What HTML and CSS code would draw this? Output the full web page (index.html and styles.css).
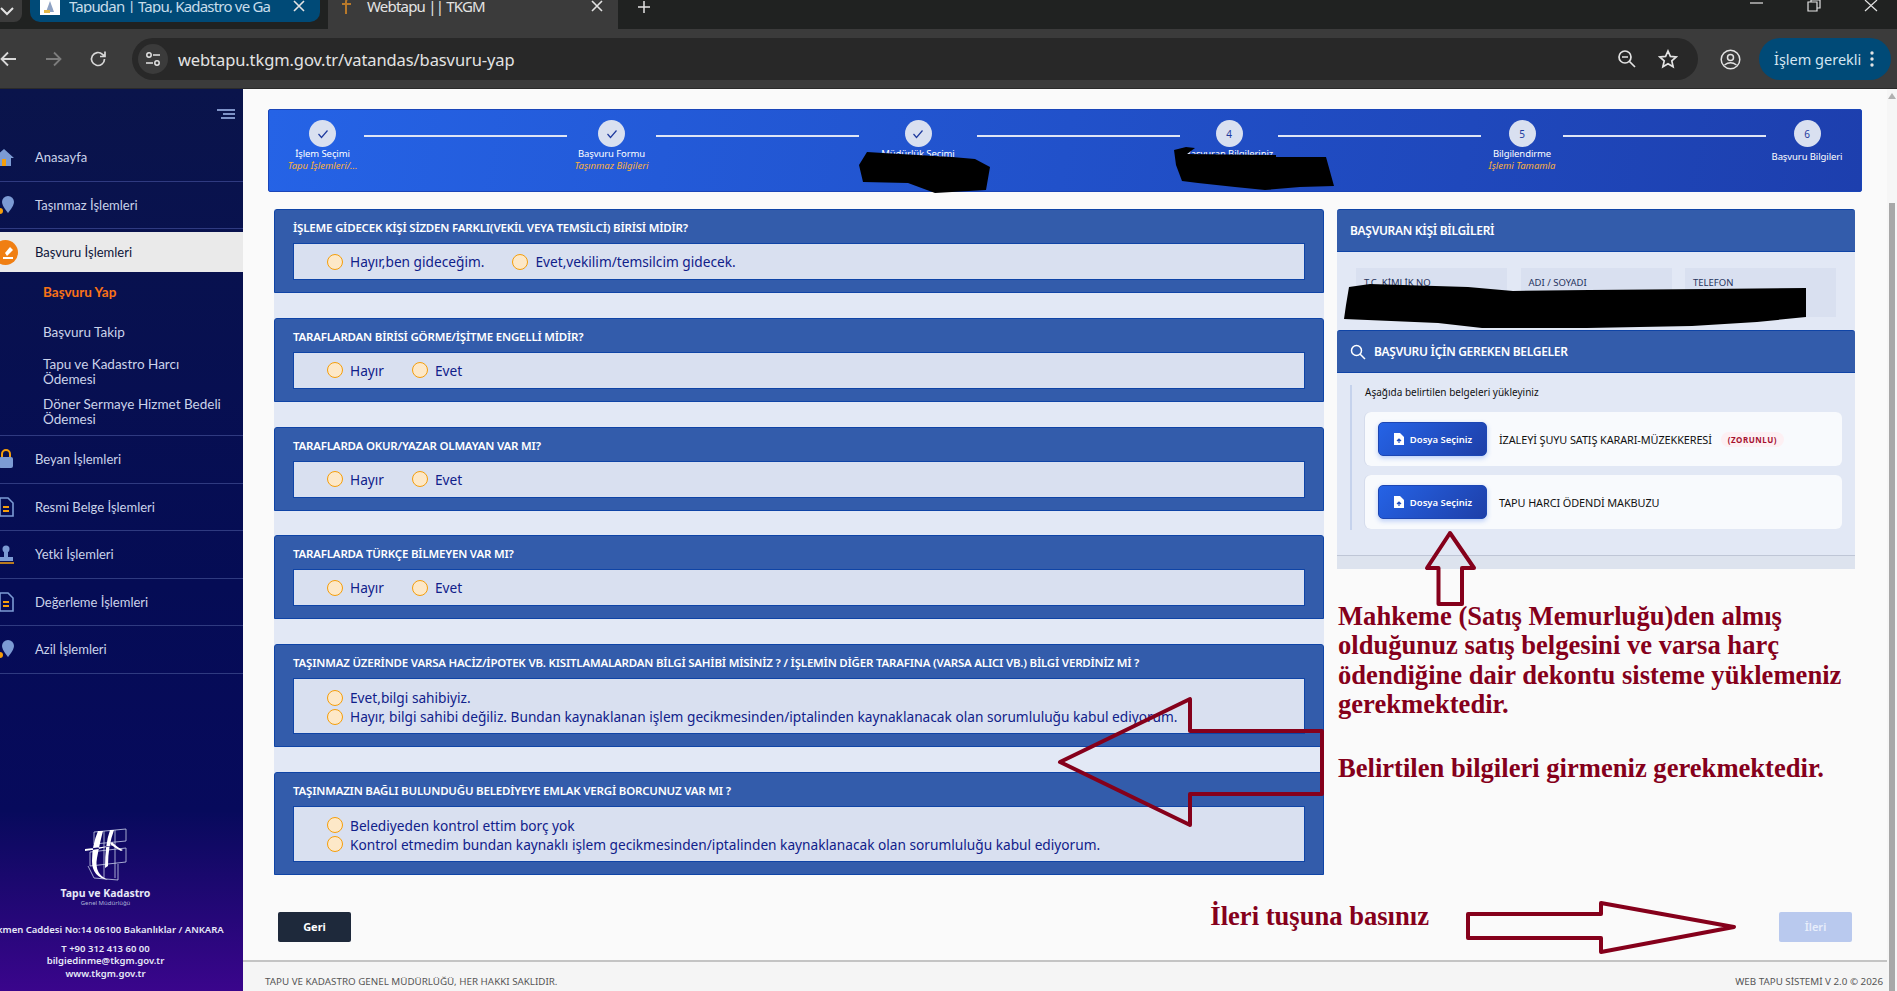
FILE: index.html
```html
<!DOCTYPE html>
<html lang="tr">
<head>
    <meta charset="UTF-8">
    <title>Webtapu || TKGM</title>
    <link rel="stylesheet" href="styles.css">
</head>
<body>

<header class="chrome">
    <div class="tabstrip">
        <div class="tab-menu"><svg width="14" height="10" viewBox="0 0 14 10"><path d="M1 1l6 6 6-6" fill="none" stroke="#e3e3e3" stroke-width="2"/></svg></div>
        <div class="tab tab-group">
            <span class="favicon"><svg width="20" height="15" viewBox="0 0 20 15"><path d="M6 12l4-11 4 11z" fill="#8fa3c4"/><rect x="4" y="10" width="6" height="3" fill="#e2b84a"/></svg></span>
            <span class="tab-title">Tapudan | Tapu, Kadastro ve Ga</span>
            <svg class="tab-close" width="12" height="12" viewBox="0 0 12 12"><path d="M1 1l10 10M11 1L1 11" stroke="#e3e3e3" stroke-width="1.6"/></svg>
        </div>
        <div class="tab tab-active">
            <svg class="tab-icon" width="18" height="18" viewBox="0 0 18 18"><path d="M6 17V5q0-4 5-4M2 7h9" fill="none" stroke="#b8792a" stroke-width="2"/></svg>
            <span class="tab-title">Webtapu || TKGM</span>
            <svg class="tab-close" width="12" height="12" viewBox="0 0 12 12"><path d="M1 1l10 10M11 1L1 11" stroke="#e3e3e3" stroke-width="1.6"/></svg>
        </div>
        <svg class="new-tab" width="14" height="14" viewBox="0 0 14 14"><path d="M7 1v12M1 7h12" stroke="#e3e3e3" stroke-width="1.5"/></svg>
        <div class="win-controls">
            <svg width="14" height="8" viewBox="0 0 14 8"><path d="M0 3h13" stroke="#e3e3e3" stroke-width="1.2"/></svg>
            <svg width="14" height="12" viewBox="0 0 14 12"><path d="M1 2h9v9H1zM4 2V0h9v8h-3" fill="none" stroke="#e3e3e3" stroke-width="1.2"/></svg>
            <svg width="14" height="12" viewBox="0 0 14 12"><path d="M1 0l12 11M13 0L1 11" stroke="#e3e3e3" stroke-width="1.2"/></svg>
        </div>
    </div>
    <div class="toolbar">
        <svg class="nav-icon nav-back" width="18" height="16" viewBox="0 0 18 16"><path d="M16 8H2M8 1.500L1.500 8 8 14.500" fill="none" stroke="#d8d8d8" stroke-width="1.8"/></svg>
        <svg class="nav-icon nav-forward" width="18" height="16" viewBox="0 0 18 16"><path d="M2 8h14M10 1.500L16.500 8 10 14.500" fill="none" stroke="#7d7d7d" stroke-width="1.800"/></svg>
        <svg class="nav-icon nav-reload" width="18" height="18" viewBox="0 0 18 18"><path d="M15.500 9a6.500 6.500 0 1 1-2-4.700L16 6.500M16 1.500v5h-5" fill="none" stroke="#d8d8d8" stroke-width="1.700"/></svg>
        <div class="omnibox">
            <span class="site-chip"><svg width="16" height="16" viewBox="0 0 16 16"><circle cx="4" cy="4" r="2.200" fill="none" stroke="#e3e3e3" stroke-width="1.500"/><circle cx="12" cy="12" r="2.200" fill="none" stroke="#e3e3e3" stroke-width="1.500"/><path d="M8 4h7M1 12h7" stroke="#e3e3e3" stroke-width="1.500"/></svg></span>
            <span class="url">webtapu.tkgm.gov.tr/vatandas/basvuru-yap</span>
            <svg class="omni-zoom" width="20" height="20" viewBox="0 0 20 20"><circle cx="8" cy="8" r="6" fill="none" stroke="#e3e3e3" stroke-width="1.700"/><path d="M5 8h6M12.500 12.500L18 18" stroke="#e3e3e3" stroke-width="1.700"/></svg>
            <svg class="omni-star" width="20" height="20" viewBox="0 0 20 20"><path d="M10 2l2.400 5.400 5.800.6-4.400 3.900 1.300 5.800L10 14.700l-5.100 3 1.300-5.800L1.800 8l5.800-.6z" fill="none" stroke="#e3e3e3" stroke-width="1.700"/></svg>
        </div>
        <svg class="profile" width="21" height="21" viewBox="0 0 21 21"><circle cx="10.500" cy="10.500" r="9.300" fill="none" stroke="#e3e3e3" stroke-width="1.500"/><circle cx="10.500" cy="8.500" r="3" fill="none" stroke="#e3e3e3" stroke-width="1.500"/><path d="M4.500 16q6-4.500 12 0" fill="none" stroke="#e3e3e3" stroke-width="1.500"/></svg>
        <div class="action-pill">
            <span>İşlem gerekli</span>
            <svg width="4" height="16" viewBox="0 0 4 16"><circle cx="2" cy="2" r="1.700" fill="#e3e3e3"/><circle cx="2" cy="8" r="1.700" fill="#e3e3e3"/><circle cx="2" cy="14" r="1.700" fill="#e3e3e3"/></svg>
        </div>
    </div>
</header>

<div class="app">
    <aside class="sidebar">
        <div class="sidebar-inner">
            <div class="hamburger"><span class="ham-long"></span><span class="ham-short"></span><span class="ham-mid"></span></div>
            <nav class="menu">
                <a class="menu-item">
                    <svg class="menu-icon" viewBox="0 0 20 20"><path d="M10 2L0 11h3v8h14v-8h3z" fill="#7c9bd4"/><rect x="8" y="12" width="4" height="7" fill="#f59e0b"/></svg>
                    Anasayfa
                </a>
                <a class="menu-item">
                    <svg class="menu-icon" viewBox="0 0 20 20"><path d="M14 1a6 6 0 0 1 6 6c0 4-6 11-6 11S8 11 8 7a6 6 0 0 1 6-6z" fill="#7c9bd4"/><circle cx="6" cy="16" r="3" fill="#f59e0b"/></svg>
                    Taşınmaz İşlemleri
                </a>
                <a class="menu-item menu-active">
                    <span class="active-badge"><svg width="18" height="18" viewBox="0 0 18 18"><path d="M8 10l5-6 3 3-6 6z" fill="#fff"/><path d="M6 15h10" stroke="#fff" stroke-width="2"/></svg></span>
                    Başvuru İşlemleri
                </a>
                <div class="submenu">
                    <a class="sub-item sub-current">Başvuru Yap</a>
                    <a class="sub-item">Başvuru Takip</a>
                    <a class="sub-item">Tapu ve Kadastro Harcı Ödemesi</a>
                    <a class="sub-item">Döner Sermaye Hizmet Bedeli Ödemesi</a>
                </div>
                <a class="menu-item">
                    <svg class="menu-icon" viewBox="0 0 20 20"><rect x="5" y="8" width="14" height="11" rx="2" fill="#7c9bd4"/><path d="M8 8V5a4 4 0 0 1 8 0v3" fill="none" stroke="#f59e0b" stroke-width="2"/></svg>
                    Beyan İşlemleri
                </a>
                <a class="menu-item">
                    <svg class="menu-icon" viewBox="0 0 20 20"><path d="M6 1h8l5 5v13H6z" fill="none" stroke="#7c9bd4" stroke-width="1.600"/><path d="M9 10h6M9 14h6" stroke="#f59e0b" stroke-width="2"/></svg>
                    Resmi Belge İşlemleri
                </a>
                <a class="menu-item">
                    <svg class="menu-icon" viewBox="0 0 20 20"><circle cx="12" cy="5" r="3.500" fill="#7c9bd4"/><path d="M10 8h4v5h5v4H5v-4h5z" fill="#7c9bd4"/><path d="M4 19h16" stroke="#f59e0b" stroke-width="1.500"/></svg>
                    Yetki İşlemleri
                </a>
                <a class="menu-item">
                    <svg class="menu-icon" viewBox="0 0 20 20"><path d="M6 1h8l5 5v13H6z" fill="none" stroke="#7c9bd4" stroke-width="1.600"/><path d="M9 10h6M9 14h6" stroke="#f59e0b" stroke-width="2"/></svg>
                    Değerleme İşlemleri
                </a>
                <a class="menu-item">
                    <svg class="menu-icon" viewBox="0 0 20 20"><path d="M14 1a6 6 0 0 1 6 6c0 4-6 11-6 11S8 11 8 7a6 6 0 0 1 6-6z" fill="#7c9bd4"/><circle cx="6" cy="16" r="3" fill="#f59e0b"/></svg>
                    Azil İşlemleri
                </a>
            </nav>
            <div class="sidebar-foot">
                <svg class="tkgm-logo" width="44" height="54" viewBox="0 0 44 54">
                    <g fill="none" stroke="#c9d0ea" stroke-width="0.800"><path d="M10 4l32-3v12l-32 3zM6 24l36-4v14l-36 4zM4 38l6 12 24 2V36M20 3v48M31 2v48"/></g>
                    <path d="M14 3q-6 14-6 30t16 19q-14-6-11-22t6-27zM26 2q-5 14-5 38l3-2q0-20 6-36zM1 21q18-2 30-4-14 4-30 6zM28 14q6 6 11 8l-2 1q-6-3-11-7z" fill="#fff"/>
                </svg>
                <div class="logo-name">Tapu ve Kadastro</div>
                <div class="logo-sub">Genel Müdürlüğü</div>
                <div class="foot-address">Dikmen Caddesi No:14 06100 Bakanlıklar / ANKARA</div>
                <div class="foot-contact">
                    <div>T +90 312 413 60 00</div>
                    <div>bilgiedinme@tkgm.gov.tr</div>
                    <div>www.tkgm.gov.tr</div>
                </div>
            </div>
        </div>
    </aside>

    <main class="main">
        <div class="content">
            <div class="stepper">
                <div class="step step-first">
                    <span class="step-dot"><svg width="12" height="10" viewBox="0 0 12 10"><path d="M1.500 5l3 3.500L10.500 1.500" fill="none" stroke="#1e3a9e" stroke-width="1.200"/></svg></span>
                    <span class="step-label">İşlem Seçimi</span>
                    <span class="step-sub">Tapu İşlemleri/...</span>
                </div>
                <span class="step-line"></span>
                <div class="step step-second">
                    <span class="step-dot"><svg width="12" height="10" viewBox="0 0 12 10"><path d="M1.500 5l3 3.500L10.500 1.500" fill="none" stroke="#1e3a9e" stroke-width="1.200"/></svg></span>
                    <span class="step-label">Başvuru Formu</span>
                    <span class="step-sub">Taşınmaz Bilgileri</span>
                </div>
                <span class="step-line"></span>
                <div class="step step-third">
                    <span class="step-dot"><svg width="12" height="10" viewBox="0 0 12 10"><path d="M1.500 5l3 3.500L10.500 1.500" fill="none" stroke="#1e3a9e" stroke-width="1.200"/></svg></span>
                    <span class="step-label">Müdürlük Seçimi</span>
                </div>
                <span class="step-line"></span>
                <div class="step step-fourth">
                    <span class="step-dot">4</span>
                    <span class="step-label">Başvuran Bilgileriniz</span>
                </div>
                <span class="step-line"></span>
                <div class="step">
                    <span class="step-dot">5</span>
                    <span class="step-label">Bilgilendirme</span>
                    <span class="step-sub">İşlemi Tamamla</span>
                </div>
                <span class="step-line"></span>
                <div class="step step-last">
                    <span class="step-dot">6</span>
                    <span class="step-label">Başvuru Bilgileri</span>
                </div>
            </div>

            <div class="columns">
                <section class="questions">
                    <div class="q-card">
                        <h3 class="q-title">İŞLEME GİDECEK KİŞİ SİZDEN FARKLI(VEKİL VEYA TEMSİLCİ) BİRİSİ MİDİR?</h3>
                        <div class="q-box q-inline">
                            <label class="radio"><span class="radio-dot"></span>Hayır,ben gideceğim.</label>
                            <label class="radio"><span class="radio-dot"></span>Evet,vekilim/temsilcim gidecek.</label>
                        </div>
                    </div>
                    <div class="q-card">
                        <h3 class="q-title">TARAFLARDAN BİRİSİ GÖRME/İŞİTME ENGELLİ MİDİR?</h3>
                        <div class="q-box q-inline">
                            <label class="radio"><span class="radio-dot"></span>Hayır</label>
                            <label class="radio"><span class="radio-dot"></span>Evet</label>
                        </div>
                    </div>
                    <div class="q-card">
                        <h3 class="q-title">TARAFLARDA OKUR/YAZAR OLMAYAN VAR MI?</h3>
                        <div class="q-box q-inline">
                            <label class="radio"><span class="radio-dot"></span>Hayır</label>
                            <label class="radio"><span class="radio-dot"></span>Evet</label>
                        </div>
                    </div>
                    <div class="q-card">
                        <h3 class="q-title">TARAFLARDA TÜRKÇE BİLMEYEN VAR MI?</h3>
                        <div class="q-box q-inline">
                            <label class="radio"><span class="radio-dot"></span>Hayır</label>
                            <label class="radio"><span class="radio-dot"></span>Evet</label>
                        </div>
                    </div>
                    <div class="q-card">
                        <h3 class="q-title">TAŞINMAZ ÜZERİNDE VARSA HACİZ/İPOTEK VB. KISITLAMALARDAN BİLGİ SAHİBİ MİSİNİZ ? / İŞLEMİN DİĞER TARAFINA (VARSA ALICI VB.) BİLGİ VERDİNİZ Mİ ?</h3>
                        <div class="q-box q-stack">
                            <label class="radio"><span class="radio-dot"></span>Evet,bilgi sahibiyiz.</label>
                            <label class="radio"><span class="radio-dot"></span>Hayır, bilgi sahibi değiliz. Bundan kaynaklanan işlem gecikmesinden/iptalinden kaynaklanacak olan sorumluluğu kabul ediyorum.</label>
                        </div>
                    </div>
                    <div class="q-card">
                        <h3 class="q-title">TAŞINMAZIN BAĞLI BULUNDUĞU BELEDİYEYE EMLAK VERGİ BORCUNUZ VAR MI ?</h3>
                        <div class="q-box q-stack">
                            <label class="radio"><span class="radio-dot"></span>Belediyeden kontrol ettim borç yok</label>
                            <label class="radio"><span class="radio-dot"></span>Kontrol etmedim bundan kaynaklı işlem gecikmesinden/iptalinden kaynaklanacak olan sorumluluğu kabul ediyorum.</label>
                        </div>
                    </div>
                </section>

                <section class="side-col">
                    <div class="panel">
                        <h3 class="panel-head">BAŞVURAN KİŞİ BİLGİLERİ</h3>
                        <div class="fields">
                            <div class="field">T.C. KİMLİK NO</div>
                            <div class="field">ADI / SOYADI</div>
                            <div class="field">TELEFON</div>
                        </div>
                        <h3 class="panel-head">
                            <svg width="16" height="16" viewBox="0 0 16 16"><circle cx="6.500" cy="6.500" r="5" fill="none" stroke="#fff" stroke-width="1.500"/><path d="M10 10l5 5" stroke="#fff" stroke-width="1.500"/></svg>
                            BAŞVURU İÇİN GEREKEN BELGELER
                        </h3>
                        <div class="docs">
                            <p class="docs-note">Aşağıda belirtilen belgeleri yükleyiniz</p>
                            <div class="doc-row">
                                <button class="file-btn"><svg width="12" height="14" viewBox="0 0 12 14"><path d="M1 1h6l4 4v8H1z" fill="#fff"/><path d="M6 11V7M4 9l2-2 2 2" fill="none" stroke="#1f4ec0" stroke-width="1.200"/></svg>Dosya Seçiniz</button>
                                <span class="doc-name">İZALEYİ ŞUYU SATIŞ KARARI-MÜZEKKERESİ</span>
                                <span class="doc-badge">(ZORUNLU)</span>
                            </div>
                            <div class="doc-row">
                                <button class="file-btn"><svg width="12" height="14" viewBox="0 0 12 14"><path d="M1 1h6l4 4v8H1z" fill="#fff"/><path d="M6 11V7M4 9l2-2 2 2" fill="none" stroke="#1f4ec0" stroke-width="1.200"/></svg>Dosya Seçiniz</button>
                                <span class="doc-name">TAPU HARCI ÖDENDİ MAKBUZU</span>
                            </div>
                        </div>
                        <div class="panel-foot"></div>
                    </div>
                    <p class="note note-first">Mahkeme (Satış Memurluğu)den almış olduğunuz satış belgesini ve varsa harç ödendiğine dair dekontu sisteme yüklemeniz gerekmektedir.</p>
                    <p class="note note-second">Belirtilen bilgileri girmeniz gerekmektedir.</p>
                </section>
            </div>

            <div class="actions">
                <button class="btn-back">Geri</button>
                <span class="note note-next">İleri tuşuna basınız</span>
                <button class="btn-next">İleri</button>
            </div>
        </div>
        <footer class="page-foot">
            <span>TAPU VE KADASTRO GENEL MÜDÜRLÜĞÜ, HER HAKKI SAKLIDIR.</span>
            <span>WEB TAPU SİSTEMİ V 2.0 © 2026</span>
        </footer>
    </main>

    <div class="scrollbar"><span class="scroll-up"></span><span class="scroll-thumb"></span></div>
</div>

<!-- kullanicinin ekran goruntusune cizdigi isaretler -->
<svg class="markup" width="1897" height="991" viewBox="0 0 1897 991">
    <g fill="#000">
        <path d="M867 152l16 1 69 4 23 2 15 8-4 23-51 3-27-10-45-1-4-17z"/>
        <path d="M1174 150l12-3 9 1-8 6 89 1 0 2 50 0 8 29-34 1-35 3-30-3-37-4-16-2-6-16z"/>
        <path d="M1349 287l21-3 98 3 45 4 76-1 118-1 99-1 0 29-49 5-65 4-105 2-105 0-44-5-94-4 2-14z"/>
    </g>
    <g fill="none" stroke="#85001b" stroke-width="4" stroke-linejoin="round">
        <path d="M1060 762l130-63v32h132v63h-132v31z"/>
        <path d="M1468 914h133v-11l133 24-133 25v-14h-133z"/>
        <path d="M1450 533l-23 35h11.500v36h23.500v-36h12z"/>
    </g>
</svg>

</body>
</html>
```

FILE: styles.css
```css
* {
    box-sizing: border-box;
}
html, body {
    margin: 0;
    height: 100%;
}
body {
    display: flex;
    flex-direction: column;
    height: 100vh;
    overflow: hidden;
    position: relative;
    font-family: "Noto Sans", Arial, sans-serif;
    background-color: #fafafa;
}

/* tarayici */
.chrome {
    flex: none;
    background-color: #3b3b3b;
    color: #e3e3e3;
}
.tabstrip {
    display: flex;
    align-items: flex-start;
    height: 29px;
    background-color: #202221;
}
.tab-menu {
    width: 22px;
    height: 22px;
    background-color: #3b3b3b;
    border-radius: 0 0 8px 0;
}
.tab {
    display: flex;
    align-items: flex-start;
    overflow: hidden;
}
.tab-title {
    font-size: 15px;
    letter-spacing: -0.8px;
    line-height: 13px;
    white-space: nowrap;
}
.tab-group {
    margin-left: 8px;
    width: 290px;
    height: 22px;
    padding-left: 10px;
    background-color: #004a77;
    border-radius: 0 0 10px 10px;
    color: #c6dcea;
}
.favicon {
    width: 20px;
    height: 15px;
    background-color: #fff;
    margin-right: 9px;
    flex: none;
}
.favicon svg {
    display: block;
}
.tab-group .tab-title {
    width: 206px;
    margin-right: 18px;
    overflow: hidden;
}
.tab-close {
    flex: none;
}
.tab-active {
    margin-left: 8px;
    width: 290px;
    height: 29px;
    padding-left: 12px;
    background-color: #3b3b3b;
}
.tab-icon {
    margin-right: 9px;
    margin-top: -3px;
    flex: none;
}
.tab-active .tab-title {
    width: 224px;
}
.new-tab {
    margin-left: 19px;
}
.win-controls {
    margin-left: auto;
    display: flex;
    gap: 43px;
    padding-right: 19px;
}
.toolbar {
    display: flex;
    align-items: center;
    height: 60px;
    border-bottom: 1px solid #2a2a2a;
    padding-top: 1px;
}
.nav-forward {
    margin-left: 26px;
}
.nav-reload {
    margin-left: 27px;
}
.omnibox {
    display: flex;
    align-items: center;
    margin-left: 25px;
    width: 1566px;
    height: 42px;
    background-color: #282828;
    border-radius: 21px;
    padding: 0 18px 0 6px;
}
.site-chip {
    display: flex;
    align-items: center;
    justify-content: center;
    width: 30px;
    height: 30px;
    border-radius: 50%;
    background-color: #3b3b3b;
}
.url {
    margin-left: 10px;
    font-size: 16.500px;
    letter-spacing: -0.1px;
}
.omni-zoom {
    margin-left: auto;
}
.omni-star {
    margin-left: 21px;
    margin-right: 2px;
}
.profile {
    margin-left: 22px;
}
.action-pill {
    display: flex;
    align-items: center;
    margin-left: 18px;
    width: 132px;
    height: 42px;
    padding: 0 17px 0 15px;
    justify-content: space-between;
    background-color: #004a77;
    border-radius: 21px;
    font-size: 14.500px;
    color: #d4e6f2;
}

/* uygulama */
.app {
    flex: 1;
    display: flex;
    min-height: 0;
}
.sidebar {
    flex: none;
    width: 243px;
    overflow: hidden;
    background: linear-gradient(180deg, #0a144b 0%, #050c55 55%, #070a5c 80%, #3a058c 100%);
}
.sidebar-inner {
    display: flex;
    flex-direction: column;
    height: 100%;
    width: 259px;
    margin-left: -16px;
}
.hamburger {
    display: flex;
    flex-direction: column;
    align-items: flex-end;
    gap: 2px;
    padding: 20px 8px 0 0;
    height: 45px;
}
.hamburger span {
    display: block;
    height: 2px;
    background-color: #7e93c8;
}
.ham-long {
    width: 18px;
}
.ham-short {
    width: 12px;
}
.ham-mid {
    width: 14px;
}
.menu-item {
    display: flex;
    align-items: center;
    height: 47.500px;
    padding-left: 10px;
    gap: 21px;
    font-family: Lato, Arial, sans-serif;
    font-size: 13px;
    color: #cbd3ea;
    border-bottom: 1px solid #2f3a80;
}
.menu-icon {
    width: 20px;
    height: 20px;
    flex: none;
}
.menu-active {
    height: 40px;
    margin-top: 3px;
    padding-left: 9px;
    gap: 17px;
    background-color: #eaeaea;
    color: #0d1438;
    border-bottom: none;
}
.active-badge {
    display: flex;
    align-items: center;
    justify-content: center;
    width: 25px;
    height: 25px;
    border-radius: 50%;
    background-color: #f07f13;
    flex: none;
}
.submenu {
    padding: 13px 16px 0 59px;
    height: 164px;
    border-bottom: 1px solid #2f3a80;
    font-family: Lato, Arial, sans-serif;
    font-size: 13.500px;
    line-height: 15px;
    color: #cbd3ea;
}
.sub-item {
    display: block;
    margin-bottom: 10px;
}
.sub-item:nth-child(1) {
    margin-bottom: 25px;
}
.sub-item:nth-child(2) {
    margin-bottom: 17px;
}
.sub-current {
    color: #f97316;
    font-weight: 700;
}
.sidebar-foot {
    margin-top: auto;
    padding: 0 16px 11px 0;
    text-align: center;
    color: #e6e9f7;
    white-space: nowrap;
}
.tkgm-logo {
    display: block;
    margin: 0 auto;
}
.logo-name {
    font-size: 10.500px;
    font-weight: 700;
    line-height: 14px;
    margin-top: 4px;
}
.logo-sub {
    font-size: 6px;
    line-height: 6px;
    color: #aab3d8;
}
.foot-address {
    font-size: 9.500px;
    font-weight: 600;
    margin-top: 17px;
    line-height: 14px;
}
.foot-contact {
    margin-top: 6px;
    font-size: 9.500px;
    font-weight: 600;
    line-height: 12.500px;
}

/* icerik */
.main {
    flex: 1;
    display: flex;
    flex-direction: column;
    min-width: 0;
    background-color: #fafafa;
}
.content {
    flex: 1;
    padding: 20px 25px 0;
}
.stepper {
    display: flex;
    align-items: flex-start;
    height: 83px;
    padding: 0 13px 0 12px;
    background: linear-gradient(100deg, #2563e6, #1d3fae);
    border: 1px solid #1a45b8;
    border-radius: 2px;
    color: #fff;
}
.step {
    display: flex;
    flex-direction: column;
    align-items: center;
    flex: none;
    padding-top: 10px;
    width: 82px;
    white-space: nowrap;
}
.step-first {
    width: 83px;
}
.step-second {
    width: 89px;
}
.step-third {
    width: 118px;
}
.step-fourth {
    width: 98px;
}
.step-dot {
    display: flex;
    align-items: center;
    justify-content: center;
    width: 27px;
    height: 27px;
    border-radius: 50%;
    background-color: #d9e0f0;
    color: #1e3a9e;
    font-size: 10px;
}
.step-label {
    font-size: 9.500px;
    letter-spacing: -0.1px;
    line-height: 12px;
    margin-top: 1px;
}
.step-sub {
    font-size: 9.500px;
    line-height: 12px;
    font-style: italic;
    color: #fbb03b;
}
.step-last .step-label {
    margin-top: 4px;
}
.step-line {
    flex: 1;
    height: 2px;
    margin-top: 25px;
    background-color: #dfe5f5;
}
.columns {
    display: flex;
    align-items: flex-start;
    gap: 13px;
    margin: 17px 7px 0 6px;
}
.questions {
    flex: none;
    width: 1050px;
    display: flex;
    flex-direction: column;
    gap: 24.750px;
    background-color: #e2e8f5;
}
.q-card {
    background-color: #335cab;
    border: 1px solid #0f44a6;
    border-radius: 3px 3px 0 0;
    padding: 0 18px 12px;
}
.q-title {
    margin: 0;
    height: 33px;
    line-height: 36px;
    font-size: 11.500px;
    font-weight: 600;
    letter-spacing: -0.2px;
    color: #fff;
    white-space: nowrap;
}
.q-box {
    background-color: #d9e0f0;
    border: 1px solid #0f44a6;
    padding-left: 33px;
    color: #10208a;
    font-size: 13.700px;
}
.q-inline {
    display: flex;
    align-items: center;
    gap: 28px;
    height: 37px;
}
.q-stack {
    display: flex;
    flex-direction: column;
    justify-content: center;
    height: 56px;
    padding-top: 2px;
}
.q-stack .radio {
    height: 19px;
}
.radio {
    display: flex;
    align-items: center;
    gap: 7px;
    white-space: nowrap;
}
.radio-dot {
    flex: none;
    width: 16px;
    height: 16px;
    border-radius: 50%;
    background-color: #fde8c8;
    border: 1.500px solid #f59e0b;
}

/* sag kolon */
.side-col {
    flex: 1;
    min-width: 0;
}
.panel {
    background-color: #e2e8f5;
    border-radius: 3px 3px 0 0;
}
.panel-head {
    display: flex;
    align-items: center;
    gap: 8px;
    margin: 0;
    height: 43px;
    padding-left: 13px;
    background-color: #335cab;
    border: 1px solid #0f44a6;
    border-width: 1px 0;
    border-radius: 3px 3px 0 0;
    color: #fff;
    font-size: 12px;
    font-weight: 600;
    letter-spacing: -0.3px;
}
.fields {
    display: flex;
    gap: 13.500px;
    height: 78px;
    padding: 16px 19px 13px;
}
.field {
    flex: 1;
    background-color: #d9e0f0;
    padding: 8px 8px;
    font-size: 9.500px;
    color: #27345e;
}
.docs {
    margin: 12px 13px 0;
    padding: 0 0 1px 13px;
    border-left: 2px solid #c5d2ec;
}
.docs-note {
    margin: 0 0 12px;
    font-size: 10px;
    line-height: 15px;
    color: #111;
}
.doc-row {
    display: flex;
    align-items: center;
    height: 54px;
    margin-bottom: 9px;
    padding-left: 13px;
    background-color: #f8fafd;
    border-radius: 6px;
    box-shadow: -1px 0 0 #d5dcec;
}
.doc-row:last-child {
    margin-bottom: 0;
}
.file-btn {
    display: flex;
    align-items: center;
    justify-content: center;
    gap: 5px;
    width: 109px;
    height: 34px;
    border: 1px solid #1c46b4;
    border-radius: 5px;
    background: linear-gradient(135deg, #2563e6, #1e3fa8);
    box-shadow: 0 2px 5px rgba(37, 99, 235, 0.3);
    color: #fff;
    font-family: "Noto Sans", Arial, sans-serif;
    font-size: 9.500px;
    font-weight: 600;
    padding: 0;
}
.doc-name {
    margin-left: 12px;
    font-size: 10.900px;
    color: #111;
    letter-spacing: -0.1px;
}
.doc-badge {
    margin-left: 9px;
    padding: 2px 7px;
    border-radius: 9px;
    background-color: #fdf0f3;
    color: #a6102f;
    font-size: 8px;
    font-weight: 700;
    letter-spacing: 0.5px;
}
.panel-foot {
    height: 14px;
    margin-top: 25px;
    background-color: #dde3ee;
    border-top: 1px solid #bfc6d6;
}
.note {
    color: #85001b;
    font-family: "Liberation Serif", "Times New Roman", serif;
    font-weight: 700;
    font-size: 26.600px;
    line-height: 29.300px;
}
.note-first {
    margin: 33px 0 0 1px;
}
.note-second {
    margin: 35px 0 0 1px;
}
.actions {
    display: flex;
    align-items: center;
    justify-content: flex-end;
    height: 30px;
    margin: 37px 10px 0 10px;
}
.btn-back {
    width: 73px;
    height: 30px;
    margin-right: auto;
    border: none;
    border-radius: 2px;
    background-color: #1e293b;
    color: #fff;
    font-family: "Noto Sans", Arial, sans-serif;
    font-size: 11px;
    font-weight: 700;
}
.note-next {
    margin-right: 350px;
    margin-bottom: 20px;
    white-space: nowrap;
}
.btn-next {
    width: 73px;
    height: 30px;
    border: none;
    border-radius: 2px;
    background-color: #b9c9ee;
    color: #e8eefb;
    font-family: "Noto Sans", Arial, sans-serif;
    font-size: 11px;
    font-weight: 600;
}
.page-foot {
    flex: none;
    display: flex;
    justify-content: space-between;
    align-items: center;
    height: 31px;
    padding: 9px 4px 0 22px;
    background-color: #f5f5f5;
    border-top: 2px solid #c4c4c4;
    font-size: 9.800px;
    color: #555;
}
.scrollbar {
    flex: none;
    width: 10px;
    display: flex;
    flex-direction: column;
    align-items: center;
    background-color: #f6f6f6;
}
.scroll-up {
    margin-top: 4px;
    border: 4px solid transparent;
    border-top: none;
    border-bottom: 6px solid #b0b0b0;
}
.scroll-thumb {
    width: 6px;
    flex: 1;
    margin-top: 104px;
    background-color: #a8a8a8;
}
.markup {
    position: absolute;
    left: 0;
    top: 0;
    pointer-events: none;
}
```
